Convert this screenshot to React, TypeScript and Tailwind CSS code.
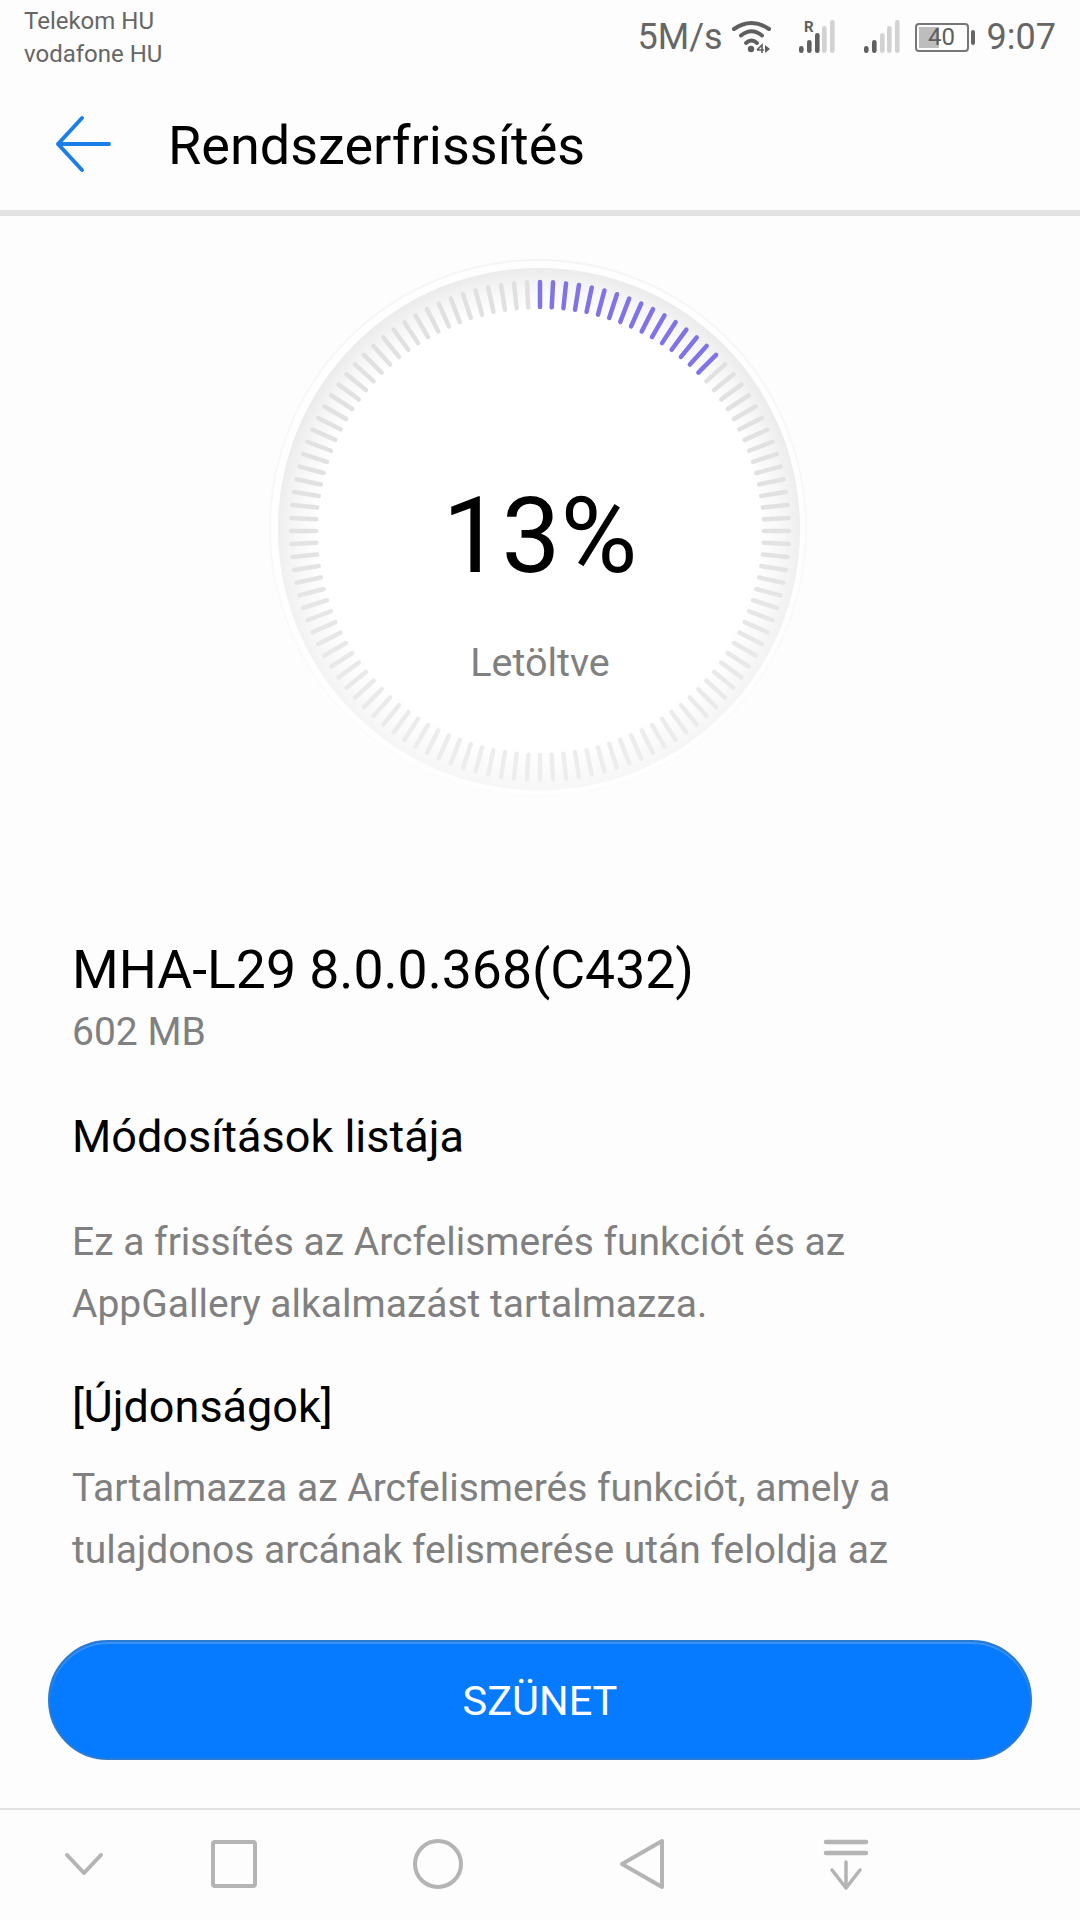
import React from "react";

const font = { fontFamily: "Roboto, sans-serif" };

function Signal({ active, roaming }: { active: number; roaming?: boolean }) {
  const bars = [
    { x: 0, h: 7 },
    { x: 8, h: 13 },
    { x: 16, h: 20 },
    { x: 23, h: 27 },
    { x: 31, h: 33 },
  ];
  return (
    <svg width="36" height="36" viewBox="0 0 36 36" className="shrink-0">
      {bars.map((b, i) => (
        <rect key={i} x={b.x} y={34 - b.h} width="4.6" height={b.h} rx="2.3" fill={i < active ? "#5f5f5f" : "#d2d2d2"} />
      ))}
      {roaming && (
        <text x="5" y="13" fontSize="15" fontWeight="700" fill="#5f5f5f" fontFamily="Roboto">R</text>
      )}
    </svg>
  );
}

function Dial() {
  const ticks = Array.from({ length: 120 }, (_, i) => i);
  return (
    <svg width="560" height="560" viewBox="-280 -280 560 560">
      <defs>
        <radialGradient id="band" cx="-1" cy="-2" r="261" gradientUnits="userSpaceOnUse">
          <stop offset="0.84" stopColor="#ffffff" />
          <stop offset="0.93" stopColor="#f6f6f6" />
          <stop offset="1" stopColor="#ebebeb" />
        </radialGradient>
        <linearGradient id="fade" x1="0" y1="-261" x2="0" y2="261" gradientUnits="userSpaceOnUse">
          <stop offset="0.3" stopColor="#ffffff" stopOpacity="0" />
          <stop offset="1" stopColor="#ffffff" stopOpacity="0.6" />
        </linearGradient>
        <linearGradient id="rim" x1="0" y1="-270" x2="0" y2="270" gradientUnits="userSpaceOnUse">
          <stop offset="0" stopColor="#f5f5f5" />
          <stop offset="1" stopColor="#fcfcfc" />
        </linearGradient>
        <linearGradient id="tick" x1="0" y1="-250" x2="0" y2="250" gradientUnits="userSpaceOnUse">
          <stop offset="0" stopColor="#e0e0e0" />
          <stop offset="0.5" stopColor="#e2e2e2" />
          <stop offset="1" stopColor="#eeeeee" />
        </linearGradient>
      </defs>
      <circle cx="-2" cy="-3" r="268" fill="#fefefe" stroke="url(#rim)" strokeWidth="2" />
      <circle cx="-1" cy="-2" r="261" fill="url(#band)" />
      <circle cx="-1" cy="-2" r="261" fill="url(#fade)" />
      {ticks.map((i) => {
        const a = (i * 3 * Math.PI) / 180;
        const s = Math.sin(a);
        const c = Math.cos(a);
        return (
          <line
            key={i}
            x1={s * 224}
            y1={-c * 224}
            x2={s * 249}
            y2={-c * 249}
            stroke={i < 16 ? "#7f73e6" : "url(#tick)"}
            strokeWidth="4.5"
            strokeLinecap="round"
          />
        );
      })}
    </svg>
  );
}

export default function App() {
  return (
    <div className="w-[1080px] h-[1920px] bg-[#fdfdfd] flex flex-col overflow-hidden" style={font}>
      {/* status bar */}
      <div className="h-[70px] flex items-start justify-between pl-6 pr-[24px] shrink-0">
        <div className="pt-[5px] text-[24px] leading-[33px] text-[#666666]">
          <div>Telekom HU</div>
          <div>vodafone HU</div>
        </div>
        <div className="flex items-center h-[70px] mt-[2px] text-[#666666]">
          <span className="text-[36px] leading-none mr-[9px]">5M/s</span>
          <svg width="40" height="34" viewBox="0 0 40 34" className="mr-[27px]" fill="none">
            <path d="M2 9 Q19.5 -3 37 9" stroke="#5f5f5f" strokeWidth="4" strokeLinecap="round" />
            <path d="M9 15.5 Q19.5 7 30 15.5" stroke="#5f5f5f" strokeWidth="4" strokeLinecap="round" />
            <path d="M14 23 Q19.5 18 25 23" stroke="#5f5f5f" strokeWidth="4" strokeLinecap="round" />
            <circle cx="19" cy="29" r="3.2" fill="#5f5f5f" />
            <path d="M25 30 L30 25 V33 M25 30 H32" stroke="#5f5f5f" strokeWidth="1.6" />
            <path d="M33 25 V33 L38 29 Z" fill="#5f5f5f" />
          </svg>
          <Signal active={3} roaming />
          <div className="w-[29px]" />
          <Signal active={2} />
          <div className="w-[15px]" />
          <div className="relative w-[54px] h-[29px] border-2 border-[#777777] rounded-[4px] overflow-hidden flex items-center justify-center">
            <div className="absolute left-[2px] top-[2px] bottom-[2px] w-[20px] bg-[#bdbdbd]" />
            <span className="relative text-[24px] leading-none text-[#5f5f5f]">40</span>
          </div>
          <div className="w-[4px] h-[15px] bg-[#666666] rounded-[2px] ml-[2px]" />
          <span className="text-[36px] leading-none ml-[12px]">9:07</span>
        </div>
      </div>

      {/* title bar */}
      <div className="h-[140px] flex items-center shrink-0 pt-[8px]">
        <svg width="58" height="58" viewBox="0 0 58 58" fill="none" className="ml-[55px]">
          <path d="M3 29 H54 M27 3 L3 29 L27 55" stroke="#1a7fe8" strokeWidth="4" strokeLinecap="round" strokeLinejoin="round" />
        </svg>
        <h1 className="ml-[55px] pt-[4px] text-[54px] leading-none font-normal text-black">Rendszerfrissítés</h1>
      </div>
      <div className="h-[6px] bg-[#e1e1e1] shrink-0" />

      {/* dial */}
      <div className="h-[560px] shrink-0 mt-[35px] relative flex justify-center">
        <Dial />
        <div className="absolute inset-x-0 top-[226px] text-center text-[105px] leading-[120px] text-black">13%</div>
        <div className="absolute inset-x-0 top-[387px] text-center text-[39.5px] leading-[50px] text-[#808080]">Letöltve</div>
      </div>

      {/* details */}
      <div className="flex-1 min-h-0 px-[72px] pt-[128px] overflow-hidden">
        <div className="text-[53.5px] leading-[62px] text-black">MHA-L29 8.0.0.368(C432)</div>
        <div className="text-[39px] leading-[50px] text-[#808080] mt-[6px]">602 MB</div>
        <div className="text-[45px] leading-[56px] text-black mt-[52px]">Módosítások listája</div>
        <div className="text-[39px] leading-[62px] text-[#808080] mt-[46px]">
          Ez a frissítés az Arcfelismerés funkciót és az
          <br />
          AppGallery alkalmazást tartalmazza.
        </div>
        <div className="text-[45px] leading-[56px] text-black mt-[44px]">[Újdonságok]</div>
        <div className="text-[39px] leading-[62px] text-[#808080] mt-[22px]">
          Tartalmazza az Arcfelismerés funkciót, amely a
          <br />
          tulajdonos arcának felismerése után feloldja az
        </div>
      </div>

      {/* button */}
      <div className="shrink-0 px-[48px] pb-[48px]">
        <div className="h-[120px] pt-[3px] rounded-full bg-[#067bff] border-2 border-[#2b7bd3] shadow-[inset_0_2px_0_#3a92f5] flex items-center justify-center text-white text-[41.5px]">
          SZÜNET
        </div>
      </div>

      {/* nav */}
      <div className="h-[112px] shrink-0 border-t-[2px] border-[#e2e2e2] flex items-center pb-[3px]">
        <svg width="168" height="60" viewBox="0 0 168 60" fill="none">
          <path d="M67 21 L84 39 L101 21" stroke="#b4b4b4" strokeWidth="4" strokeLinecap="round" strokeLinejoin="round" />
        </svg>
        <svg width="168" height="60" viewBox="0 0 168 60" fill="none">
          <rect x="45" y="8" width="42" height="44" rx="2" stroke="#b4b4b4" strokeWidth="4" />
        </svg>
        <svg width="204" height="60" viewBox="0 0 204 60" fill="none">
          <circle cx="102" cy="30" r="23" stroke="#b4b4b4" strokeWidth="4" />
        </svg>
        <svg width="204" height="60" viewBox="0 0 204 60" fill="none">
          <path d="M122 7 V53 L82 30 Z" stroke="#b4b4b4" strokeWidth="4" strokeLinejoin="round" />
        </svg>
        <svg width="204" height="60" viewBox="0 0 204 60" fill="none">
          <path d="M82 8 H122 M82 19 H122" stroke="#b4b4b4" strokeWidth="4.5" strokeLinecap="round" />
          <path d="M102 28 V54 M88 36 L102 54 L116 36" stroke="#b4b4b4" strokeWidth="3.5" strokeLinecap="round" strokeLinejoin="round" />
        </svg>
      </div>
    </div>
  );
}
